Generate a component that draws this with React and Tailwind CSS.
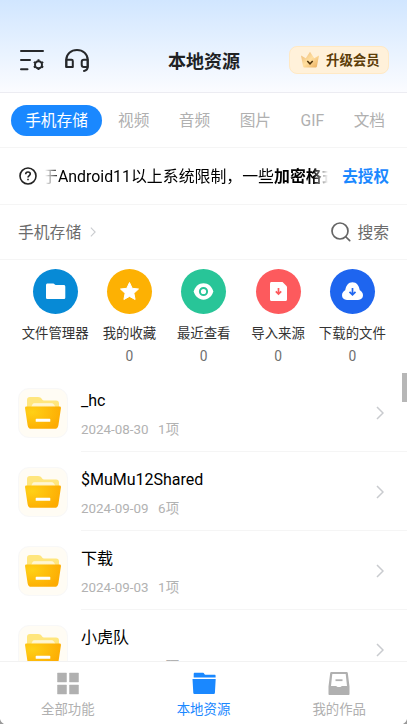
import clsx from "clsx";

const TABS = ["视频", "音频", "图片", "GIF", "文档"];

const FOLDERS = [
  { name: "_hc", date: "2024-08-30", count: 1 },
  { name: "$MuMu12Shared", date: "2024-09-09", count: 6 },
  { name: "下载", date: "2024-09-03", count: 1 },
  { name: "小虎队", date: "2024-09-03", count: 1 },
];

function MenuIcon() {
  return (
    <svg className="w-[26px] h-6" viewBox="0 0 26 24" fill="none" stroke="#26282b" strokeWidth="2" strokeLinecap="round" strokeLinejoin="round">
      <path d="M2 3h22M2 12.100h9M2 21.200h6.500" />
      <circle cx="19.500" cy="16.700" r="3.500" />
      <path
        d="M19.500 11.300v2M19.500 20.100v2M14.800 14l1.700 1M22.500 18.400l1.700 1M14.800 19.400l1.700-1M22.500 15l1.700-1"
        strokeWidth="1.900"
        strokeLinecap="butt"
      />
    </svg>
  );
}

function HeadsetIcon() {
  return (
    <svg className="w-6 h-6" viewBox="0 0 24 24" fill="none" stroke="#26282b" strokeWidth="2" strokeLinejoin="round" strokeLinecap="round">
      <path d="M1.300 18.800v-7C1.300 6 6 2 12 2s10.700 4 10.700 9.800v7c0 2.500-1.300 3.700-3.700 4.100" />
      <path d="M1.300 11.800h5.300c.8 0 1.200.5 1.200 1.200v5.900H1.300zM22.700 11.800h-3.800c-1.400 0-2.200.8-2.200 2.200v2.700c0 1.400.8 2.200 2.200 2.200h3.800z" />
    </svg>
  );
}

function CrownIcon() {
  return (
    <svg className="mb-[2px] w-5 h-[17px]" viewBox="0 0 20 17">
      <defs>
        <linearGradient id="crown" x1="0" y1="0" x2="1" y2="1">
          <stop offset="0" stopColor="#e9b574" />
          <stop offset="0.5" stopColor="#ffdfa0" />
          <stop offset="1" stopColor="#e9aa58" />
        </linearGradient>
      </defs>
      <path d="M1 4.600 5.800 7.200 10 .8l4.200 6.400L19 4.600 17 15c-.2 1-.8 1.500-1.800 1.500H4.800c-1 0-1.600-.5-1.800-1.500z" fill="url(#crown)" />
      <path d="m7.300 10 2.700 2.800 2.700-2.800" fill="none" stroke="#4f330b" strokeWidth="1.500" />
    </svg>
  );
}

function Chevron({ className }) {
  return (
    <svg className={className} viewBox="0 0 8 14" fill="none" stroke="#c9cbcf" strokeWidth="1.500">
      <path d="m1 1 6 6-6 6" />
    </svg>
  );
}

function FolderArt() {
  return (
    <svg className="w-9 h-[34px]" viewBox="0 0 36 34">
      <defs>
        <radialGradient id="pocket" cx="0.2" cy="0.25" r="0.85">
          <stop offset="0" stopColor="#ffd016" />
          <stop offset="1" stopColor="#fdac02" />
        </radialGradient>
        <linearGradient id="paper" x1="0" y1="0" x2="0" y2="1">
          <stop offset="0" stopColor="#fff9df" />
          <stop offset="1" stopColor="#ffecac" />
        </linearGradient>
      </defs>
      <path d="M2 16V4c0-2 1-3 3-3h8c2 0 3 .8 4 2.300.7 1 1.500 1.300 2.600 1.300H31c2 0 3 1 3 3V16z" fill="#ffe67d" />
      <path d="M6 13c.5-4 1.500-5.800 3.500-5.800h17c2 0 3.500 1.800 4.500 5.800z" fill="url(#paper)" />
      <path d="M1.700 10.600h32.600c1.300 0 1.800.6 1.600 1.800l-2.500 16.800c-.4 2.500-1.500 3.600-3.900 3.600h-23c-2.400 0-3.500-1.100-3.900-3.600L.1 12.400c-.2-1.200.3-1.800 1.600-1.800z" fill="url(#pocket)" />
      <rect x="10.700" y="22.800" width="14.600" height="3" rx="0.600" fill="#fff" />
    </svg>
  );
}

const SHORTCUTS = [
  {
    label: "文件管理器",
    color: "bg-[#078ad6]",
    icon: <path d="M13 16.200c0-1.100.6-1.700 1.700-1.700h5.600c1 0 1.500 1.600 2.500 1.600h7.800c1.100 0 1.700.6 1.700 1.700v10.600c0 1.100-.6 1.700-1.700 1.700H14.700c-1.100 0-1.700-.6-1.700-1.700z" fill="#fff" />,
  },
  {
    label: "我的收藏",
    count: 0,
    color: "bg-[#fdb103]",
    icon: <path d="m22.500 13.500 2.700 5.800 6.300.7-4.600 4.300 1.200 6.200-5.600-3.100-5.600 3.100 1.200-6.200-4.600-4.300 6.300-.7z" fill="#fff" stroke="#fff" strokeWidth="1" strokeLinejoin="round" />,
  },
  {
    label: "最近查看",
    count: 0,
    color: "bg-[#28c598]",
    icon: (
      <>
        <path d="M12.700 22.500c1.300-4.700 5-8.200 9.800-8.200s8.500 3.500 9.800 8.200c-1.300 4.700-5 8.200-9.800 8.200s-8.500-3.500-9.800-8.200z" fill="#fff" />
        <circle cx="22.500" cy="22.500" r="3.600" fill="none" stroke="#28c598" strokeWidth="2" />
      </>
    ),
  },
  {
    label: "导入来源",
    count: 0,
    color: "bg-[#fd5a5d]",
    icon: (
      <>
        <path d="M15.500 13h11l4.500 4.500V30.500c0 .9-.6 1.500-1.500 1.500h-14c-.9 0-1.500-.6-1.500-1.500v-16c0-.9.6-1.500 1.500-1.500z" fill="#fff" />
        <path d="M22.500 19v5.500m-2.700-2.200 2.700 2.700 2.700-2.700" fill="none" stroke="#fd5a5d" strokeWidth="1.700" />
      </>
    ),
  },
  {
    label: "下载的文件",
    count: 0,
    color: "bg-[#1e65ef]",
    icon: (
      <>
        <path d="M17 31c-3.200 0-5-2-5-4.700 0-2.500 1.600-4.100 3.200-5 .7-4.700 3.200-8.100 7.300-8.100s6.600 3.400 7.300 8.100c1.600.9 3.200 2.500 3.200 5 0 2.700-1.800 4.700-5 4.700z" fill="#fff" />
        <path d="M22.500 19v6.500m-3-2.700 3 3 3-3" fill="none" stroke="#1e65ef" strokeWidth="1.700" />
      </>
    ),
  },
];

const NAV = [
  {
    label: "全部功能",
    icon: <path d="M1.500 1h9v9h-9zM13.500 1h9v9h-9zM1.500 13h9v9h-9zM13.500 13h9v9h-9z" fill="currentColor" stroke="currentColor" strokeWidth=".5" strokeLinejoin="round" />,
  },
  {
    label: "本地资源",
    active: true,
    icon: <path d="M1.700 5.500V1.900c0-.7.400-1.100 1.100-1.100h8.300c.9 0 1.300 2 2.300 2h9.200c.6 0 1 .4 1 1v1.700zM.5 7h23.200l-.8 14c-.1.700-.5 1-1.100 1H2.400c-.6 0-1-.3-1.100-1z" fill="currentColor" />,
  },
  {
    label: "我的作品",
    icon: (
      <>
        <path fillRule="evenodd" d="M4.500 0h15c.8 0 1.200.4 1.300 1.100l1.700 13.400V22c0 .6-.4 1-1 1h-19c-.6 0-1-.4-1-1v-7.500L3.200 1.100C3.300.4 3.700 0 4.500 0zm.8 2L4 14h5c.8 0 .8 1 1.700 1h2.600c.9 0 .9-1 1.700-1h5L18.700 2z" fill="currentColor" />
        <path d="M8.500 7.300h7v1.800h-7z" fill="currentColor" />
      </>
    ),
  },
];

function FolderRow({ folder }) {
  return (
    <div className="flex h-[79.100px] shrink-0 pl-[18px]">
      <div className="mt-[15px] flex h-[50px] w-[50px] shrink-0 items-center justify-center rounded-[11px] border border-[#f8f8f8] bg-[#fffcf4]">
        <FolderArt />
      </div>
      <div className="ml-[13px] flex flex-1 items-center justify-between border-b border-[#f5f5f5] pr-[23px]">
        <div className="whitespace-nowrap pt-[4px]">
          <div className="text-[16px] leading-[24px] text-black">{folder.name}</div>
          <div className="mt-[7px] flex gap-[9.500px] text-[13.400px] leading-[20px] text-[#b2b2b2]">
            <span>{folder.date}</span>
            <span>{folder.count}项</span>
          </div>
        </div>
        <Chevron className="mt-px h-[14px] w-2" />
      </div>
    </div>
  );
}

export default function App() {
  return (
    <div className="relative flex h-[724px] w-[407px] flex-col overflow-hidden bg-white font-[Roboto,'Noto_Sans_CJK_SC',sans-serif]">
      <header className="flex h-[93px] shrink-0 items-end border-b border-[#ececf2] bg-gradient-to-b from-[#d1e6ff] to-[#fbfcff] px-[18px] pb-[16px]">
        <div className="flex h-8 w-full items-center">
          <div className="flex w-[150px] items-center gap-[20px] pl-[1px]">
            <MenuIcon />
            <HeadsetIcon />
          </div>
          <h1 className="flex-1 whitespace-nowrap pt-[3px] text-[18px] font-bold leading-none text-[#202224]">本地资源</h1>
          <button className="flex h-7 w-[100px] items-center gap-[6px] rounded-lg border border-[#ffe9c5] bg-[#fff1da] pl-[10px] text-[13.400px] font-bold text-[#5c3d08]">
            <CrownIcon />
            <span className="whitespace-nowrap pt-[3px]">升级会员</span>
          </button>
        </div>
      </header>

      <nav className="flex h-[55px] shrink-0 items-center border-b border-[#f5f5f5] pl-[11px] text-[15.700px] text-[#b0b0b0]">
        <span className="mr-4 flex h-[31px] w-[91px] items-center justify-center rounded-full bg-[#1a88ff] pt-[1px] text-white">手机存储</span>
        <div className="flex flex-1 justify-between pr-[22px] pt-[1px]">
          {TABS.map((tab) => (
            <span key={tab}>{tab}</span>
          ))}
        </div>
      </nav>

      <div className="flex h-[57px] shrink-0 items-center border-b border-[#f5f5f5] pl-[19px] pr-[18px] text-[15.600px]">
        <svg className="h-[18px] w-[18px] shrink-0" viewBox="0 0 18 18" fill="none" stroke="#222" strokeWidth="1.600">
          <circle cx="9" cy="9" r="8" />
          <path d="M6.700 7.200c0-1.400.9-2.200 2.300-2.200s2.300.8 2.300 2c0 1.400-2.300 1.700-2.300 3.500M9 11.700v1.600" />
        </svg>
        <div className="ml-[8px] w-[283px] overflow-hidden pt-[2px] text-[15.900px] [mask-image:linear-gradient(to_right,transparent,black_15px,black_268px,transparent)]">
          <p className="-ml-[3px] whitespace-nowrap text-black">
            于Android11以上系统限制，一些<b>加密格式</b>
          </p>
        </div>
        <span className="ml-auto whitespace-nowrap pt-[3px] font-bold text-[#1a88ff]">去授权</span>
      </div>

      <div className="flex h-[55px] shrink-0 items-center border-b border-[#f5f5f5] px-[18px] text-[15.800px] text-[#6b6b6b]">
        <span className="pt-[1px]">手机存储</span>
        <Chevron className="ml-[9px] h-[10px] w-[6px]" />
        <div className="ml-auto flex items-center gap-[6px]">
          <svg className="h-5 w-5" viewBox="0 0 20 20" fill="none" stroke="#656565" strokeWidth="1.700" strokeLinecap="round">
            <circle cx="9" cy="9" r="8" />
            <path d="m15 15 3.700 3.700" />
          </svg>
          <span className="pt-[1px]">搜索</span>
        </div>
      </div>

      <section className="flex h-[113px] shrink-0 pl-[18px] pr-[17.500px] pt-[9px]">
        {SHORTCUTS.map((item) => (
          <div key={item.label} className="flex flex-1 flex-col items-center">
            <div className={clsx("h-[45px] w-[45px] shrink-0 rounded-full", item.color)}>
              <svg className="h-[45px] w-[45px]" viewBox="0 0 45 45">
                {item.icon}
              </svg>
            </div>
            <span className="mt-[10px] whitespace-nowrap text-[13.400px] leading-[20px] text-[#333]">{item.label}</span>
            {item.count !== undefined && <span className="mt-[2px] text-[13.800px] leading-[20px] text-[#707070]">{item.count}</span>}
          </div>
        ))}
      </section>

      <main className="flex min-h-0 flex-1 flex-col overflow-hidden">
        {FOLDERS.map((folder) => (
          <FolderRow key={folder.name} folder={folder} />
        ))}
      </main>

      <footer className="flex h-[63px] shrink-0 border-t border-[#f2f2f2] bg-white">
        {NAV.map((item) => (
          <div
            key={item.label}
            className={clsx("flex flex-1 flex-col items-center pt-[10px]", item.active ? "text-[#1a88ff]" : "text-[#b0b0b0]")}
          >
            <svg className="h-6 w-6" viewBox="0 0 24 24">
              {item.icon}
            </svg>
            <span className="mt-[4px] text-[13.400px] leading-[20px]">{item.label}</span>
          </div>
        ))}
      </footer>

      {/* scroll thumb */}
      <div className="absolute right-0 top-[373px] h-[29px] w-[5px] bg-[#b7b7b7]" />

      {/* rounded device corners */}
      <svg className="absolute bottom-0 left-0 h-[5px] w-[4px]" viewBox="0 0 4 5">
        <path d="M0 0c.5 2 2 4 4 5H0z" fill="#999" />
      </svg>
      <svg className="absolute bottom-0 right-0 h-[5px] w-[4px]" viewBox="0 0 4 5">
        <path d="M4 0c-.5 2-2 4-4 5h4z" fill="#999" />
      </svg>
    </div>
  );
}
